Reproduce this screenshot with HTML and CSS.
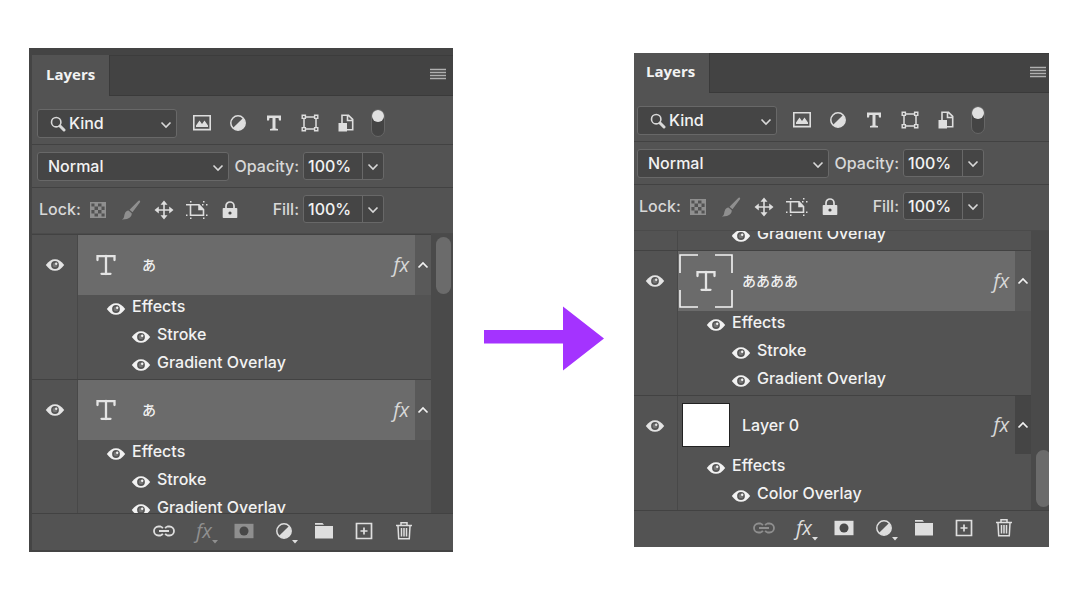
FILE: index.html
```html
<!DOCTYPE html>
<html lang="ja">
<head>
  <meta charset="UTF-8">
  <meta name="viewport" content="width=device-width, initial-scale=1">
  <title>Layers</title>
  <link rel="stylesheet" href="styles.css">
</head>
<body>
<!-- アイコン定義 -->
<svg class="sprite" aria-hidden="true">
  <symbol id="i-menu" viewBox="0 0 16 12"><path d="M0 1.5h16M0 4.5h16M0 7.5h16M0 10.5h16" stroke="currentColor" stroke-width="1.4"/></symbol>
  <symbol id="i-search" viewBox="0 0 16 16"><circle cx="6.2" cy="6.2" r="4.7" fill="none" stroke="currentColor" stroke-width="1.6"/><path d="M10 10l4 4" stroke="currentColor" stroke-width="3" stroke-linecap="round"/></symbol>
  <symbol id="i-down" viewBox="0 0 12 8"><path d="M1.500 1.500L6 6l4.500-4.500" fill="none" stroke="currentColor" stroke-width="1.600"/></symbol>
  <symbol id="i-up" viewBox="0 0 12 8"><path d="M1.500 6.500L6 2l4.500 4.500" fill="none" stroke="currentColor" stroke-width="1.700"/></symbol>
  <symbol id="i-image" viewBox="0 0 20 20"><path d="M1.800 2.800h16.400v13.800H1.800z" fill="none" stroke="currentColor" stroke-width="1.600"/><path d="M4 14V12.500l3.500-5L10 11l2.500-3.500 3.500 5V14z" fill="currentColor"/></symbol>
  <symbol id="i-adjust" viewBox="0 0 20 20"><circle cx="10" cy="10" r="7.200" fill="none" stroke="currentColor" stroke-width="1.500"/><path d="M15.100 4.900A7.200 7.200 0 0 1 4.900 15.100z" fill="currentColor"/></symbol>
  <symbol id="i-type" viewBox="0 0 20 20"><path d="M3 2.500h14V7.500h-2L14.500 5H11.500v10.500l2.500.5v1.500H6V16l2.500-.5V5H5.500L5 7.500H3z" fill="currentColor"/></symbol>
  <symbol id="i-shape" viewBox="0 0 20 20"><path d="M5 4h10M5 16h10M4 5v10M16 5v10" stroke="currentColor" stroke-width="1.500"/><path d="M2.200 2.200h3.200v3.200H2.200zM14.600 2.200h3.200v3.200h-3.200zM2.200 14.600h3.200v3.200H2.200zM14.600 14.600h3.200v3.200h-3.200z" fill="#535353" stroke="currentColor" stroke-width="1.400"/></symbol>
  <symbol id="i-smart" viewBox="0 0 20 20"><path d="M6 10V2.300h6.500l4.200 4v10.400H11M11.500 2.500v5h5" fill="none" stroke="currentColor" stroke-width="1.600"/><path d="M2.500 10h8.500v8.500H2.500z" fill="currentColor"/></symbol>
  <symbol id="i-pixels" viewBox="0 0 20 20"><path d="M2.700 2.700h14.600v14.600H2.700z" fill="none" stroke="currentColor" stroke-width="1.400"/><path d="M6.500 3H10v3.500H6.500zM13.500 3H17v3.500h-3.500zM3 6.500h3.500V10H3zM10 6.500h3.500V10H10zM6.500 10H10v3.500H6.500zM13.500 10H17v3.500h-3.500zM3 13.500h3.500V17H3zM10 13.500h3.500V17H10z" fill="currentColor"/></symbol>
  <symbol id="i-brush" viewBox="0 0 20 20"><path d="M18.800.8c.6.500.4 1.200 0 1.800l-7.300 9.600-3-2.500L17 1.200c.6-.6 1.200-.9 1.800-.4zM7.500 10.600l3.200 2.700c.4 3.200-2.600 6.500-9.900 6.200 2.800-1.500 2-3.200 2.900-5.600.6-1.900 2-3.100 3.800-3.300z" fill="currentColor"/></symbol>
  <symbol id="i-move" viewBox="0 0 20 20"><path d="M10 3v14M3 10h14" stroke="currentColor" stroke-width="1.600"/><path d="M10 .5l3.500 4.300h-7zM10 19.500l3.500-4.300h-7zM.5 10l4.300-3.500v7zM19.500 10l-4.300-3.500v7z" fill="currentColor"/></symbol>
  <symbol id="i-artboard" viewBox="0 0 22 18"><path d="M4.500 3.800V14.200h13V8.500l-4.500-4.700H0M13 4v4.500h4.500" fill="none" stroke="currentColor" stroke-width="1.600"/><path d="M4 0h1.500v1.500H4zM17 0h1.500v1.500H17zM20 3h1.500v1.500H20zM16 3h1.500v1.500H16zM0 13.500h1.500V15H0zM20 13.500h1.500V15H20zM4 16.500h1.500V18H4zM17 16.500h1.500V18H17z" fill="currentColor"/><path d="M13 4l4.500 4.500H13z" fill="currentColor"/></symbol>
  <symbol id="i-lock" viewBox="0 0 20 20"><path d="M6 9V6a4 4 0 0 1 8 0v3" fill="none" stroke="currentColor" stroke-width="1.700"/><path d="M3.500 8h13q.8 0 .8.800v8.400q0 .8-.8.800h-13q-.8 0-.8-.8V8.800q0-.8.800-.8z" fill="currentColor"/><circle cx="10" cy="13" r="1.600" fill="#484848"/></symbol>
  <symbol id="i-eye" viewBox="0 0 20 14"><path d="M.8 7C3.800 3 6.500 1.200 10 1.200S16.200 3 19.200 7c-3 4-5.700 5.800-9.200 5.800S3.800 11 .8 7z" fill="currentColor"/><circle cx="10" cy="7" r="3.900" fill="#555"/><circle cx="10" cy="7" r="2.300" fill="#777"/><circle cx="11.200" cy="5.800" r="1.200" fill="currentColor"/></symbol>
  <symbol id="i-text-layer" viewBox="0 0 20 22"><path d="M1.500 6V2.200h17V6M10 2v18M5.500 19.800h9" fill="none" stroke="currentColor" stroke-width="2.300" stroke-linecap="round"/></symbol>
  <symbol id="i-link" viewBox="0 0 22 12"><path d="M9.800 3.200A4 4 0 0 0 7.500 1.500h-2a4.500 4.500 0 0 0 0 9h2a4 4 0 0 0 2.300-1.700M12.200 3.200a4 4 0 0 1 2.300-1.700h2a4.500 4.500 0 0 1 0 9h-2a4 4 0 0 1-2.300-1.700M6 6h10" fill="none" stroke="currentColor" stroke-width="1.800"/></symbol>
  <symbol id="i-mask" viewBox="0 0 20 16"><path d="M.5.800h19v14.400H.5z" fill="currentColor"/><circle cx="10" cy="8" r="4.500" fill="#484848"/></symbol>
  <symbol id="i-folder" viewBox="0 0 20 18"><path d="M1 1h7.500l1.500 1.800H1zM1 4h18v12.500H1z" fill="currentColor"/></symbol>
  <symbol id="i-new" viewBox="0 0 18 18"><path d="M1.500 1.500h15v15h-15zM9 5.500v7M5.500 9h7" fill="none" stroke="currentColor" stroke-width="1.700"/></symbol>
  <symbol id="i-trash" viewBox="0 0 18 20"><path d="M1 4.500h16M6 4V1.800h6V4M3 5l.7 12.700h10.600L15 5M6.500 7v8.500M9 7v8.500M11.500 7v8.500" fill="none" stroke="currentColor" stroke-width="1.500"/></symbol>
  <symbol id="i-more" viewBox="0 0 6 4"><path d="M0 0h6L3 3.500z" fill="currentColor"/></symbol>
</svg>

<main class="compare">
  <!-- 左: 2つのテキストレイヤーを選択 -->
  <section class="panel panel-before">
    <header class="tabs">
      <button class="tab" type="button">Layers</button>
      <button class="menu" type="button" aria-label="Panel menu"><svg width="16" height="12"><use href="#i-menu"/></svg></button>
    </header>
    <div class="row filter-row">
      <div class="select select-kind">
        <svg class="select-icon" width="16" height="16"><use href="#i-search"/></svg>
        <select aria-label="Filter type"><option>Kind</option></select>
        <svg class="select-arrow" width="12" height="8"><use href="#i-down"/></svg>
      </div>
      <div class="filters">
        <button type="button" aria-label="Pixel layers"><svg width="20" height="20"><use href="#i-image"/></svg></button>
        <button type="button" aria-label="Adjustment layers"><svg width="20" height="20"><use href="#i-adjust"/></svg></button>
        <button type="button" aria-label="Type layers"><svg width="20" height="20"><use href="#i-type"/></svg></button>
        <button type="button" aria-label="Shape layers"><svg width="20" height="20"><use href="#i-shape"/></svg></button>
        <button type="button" aria-label="Smart objects"><svg width="20" height="20"><use href="#i-smart"/></svg></button>
      </div>
      <input class="switch" type="checkbox" aria-label="Filtering" checked>
    </div>
    <div class="row blend-row">
      <div class="select select-blend">
        <select aria-label="Blend mode"><option>Normal</option></select>
        <svg class="select-arrow" width="12" height="8"><use href="#i-down"/></svg>
      </div>
      <label class="amount-label" for="opacity-a">Opacity:</label>
      <div class="amount">
        <input id="opacity-a" type="text" value="100%">
        <button type="button" aria-label="Opacity slider"><svg width="12" height="8"><use href="#i-down"/></svg></button>
      </div>
    </div>
    <div class="row lock-row">
      <span class="lock-label">Lock:</span>
      <div class="locks">
        <button class="dim" type="button" aria-label="Lock transparent pixels"><svg width="20" height="20"><use href="#i-pixels"/></svg></button>
        <button class="dim" type="button" aria-label="Lock image pixels"><svg width="20" height="20"><use href="#i-brush"/></svg></button>
        <button type="button" aria-label="Lock position"><svg width="20" height="20"><use href="#i-move"/></svg></button>
        <button type="button" aria-label="Lock artboard nesting"><svg width="22" height="18"><use href="#i-artboard"/></svg></button>
        <button type="button" aria-label="Lock all"><svg width="20" height="20"><use href="#i-lock"/></svg></button>
      </div>
      <label class="amount-label" for="fill-a">Fill:</label>
      <div class="amount">
        <input id="fill-a" type="text" value="100%">
        <button type="button" aria-label="Fill slider"><svg width="12" height="8"><use href="#i-down"/></svg></button>
      </div>
    </div>

    <div class="list">
      <div class="layers">
        <article class="group">
          <div class="visibility"><button type="button" aria-label="Toggle layer"><svg width="20" height="14"><use href="#i-eye"/></svg></button></div>
          <div class="detail">
            <div class="layer selected">
              <div class="thumb"><svg width="20" height="22"><use href="#i-text-layer"/></svg></div>
              <span class="name name-ja">あ</span>
              <span class="fx">fx</span>
              <button class="fold" type="button" aria-label="Collapse effects"><svg width="12" height="8"><use href="#i-up"/></svg></button>
            </div>
            <ul class="effects">
              <li class="effects-title"><svg width="20" height="14"><use href="#i-eye"/></svg><span>Effects</span></li>
              <li><svg width="20" height="14"><use href="#i-eye"/></svg><span>Stroke</span></li>
              <li><svg width="20" height="14"><use href="#i-eye"/></svg><span>Gradient Overlay</span></li>
            </ul>
          </div>
        </article>
        <article class="group">
          <div class="visibility"><button type="button" aria-label="Toggle layer"><svg width="20" height="14"><use href="#i-eye"/></svg></button></div>
          <div class="detail">
            <div class="layer selected">
              <div class="thumb"><svg width="20" height="22"><use href="#i-text-layer"/></svg></div>
              <span class="name name-ja">あ</span>
              <span class="fx">fx</span>
              <button class="fold" type="button" aria-label="Collapse effects"><svg width="12" height="8"><use href="#i-up"/></svg></button>
            </div>
            <ul class="effects">
              <li class="effects-title"><svg width="20" height="14"><use href="#i-eye"/></svg><span>Effects</span></li>
              <li><svg width="20" height="14"><use href="#i-eye"/></svg><span>Stroke</span></li>
              <li><svg width="20" height="14"><use href="#i-eye"/></svg><span>Gradient Overlay</span></li>
            </ul>
          </div>
        </article>
      </div>
      <div class="track"><div class="track-thumb"></div></div>
    </div>

    <footer class="actions">
      <button type="button" aria-label="Link layers"><svg width="22" height="12"><use href="#i-link"/></svg></button>
      <button class="dim" type="button" aria-label="Add a layer style"><span class="fx">fx</span><svg class="more" width="6" height="4"><use href="#i-more"/></svg></button>
      <button class="dim" type="button" aria-label="Add layer mask"><svg width="20" height="16"><use href="#i-mask"/></svg></button>
      <button type="button" aria-label="New adjustment layer"><svg width="20" height="20"><use href="#i-adjust"/></svg><svg class="more" width="6" height="4"><use href="#i-more"/></svg></button>
      <button type="button" aria-label="New group"><svg width="20" height="18"><use href="#i-folder"/></svg></button>
      <button type="button" aria-label="New layer"><svg width="18" height="18"><use href="#i-new"/></svg></button>
      <button type="button" aria-label="Delete layer"><svg width="18" height="20"><use href="#i-trash"/></svg></button>
    </footer>
  </section>

  <svg class="arrow" width="120" height="65" viewBox="0 0 120 65" role="img" aria-label="→"><path d="M0 24h79V0.500l41 32L79 64.500V37.500H0z"/></svg>

  <!-- 右: 1つのテキストレイヤーに結合 -->
  <section class="panel panel-after">
    <header class="tabs">
      <button class="tab" type="button">Layers</button>
      <button class="menu" type="button" aria-label="Panel menu"><svg width="16" height="12"><use href="#i-menu"/></svg></button>
    </header>
    <div class="row filter-row">
      <div class="select select-kind">
        <svg class="select-icon" width="16" height="16"><use href="#i-search"/></svg>
        <select aria-label="Filter type"><option>Kind</option></select>
        <svg class="select-arrow" width="12" height="8"><use href="#i-down"/></svg>
      </div>
      <div class="filters">
        <button type="button" aria-label="Pixel layers"><svg width="20" height="20"><use href="#i-image"/></svg></button>
        <button type="button" aria-label="Adjustment layers"><svg width="20" height="20"><use href="#i-adjust"/></svg></button>
        <button type="button" aria-label="Type layers"><svg width="20" height="20"><use href="#i-type"/></svg></button>
        <button type="button" aria-label="Shape layers"><svg width="20" height="20"><use href="#i-shape"/></svg></button>
        <button type="button" aria-label="Smart objects"><svg width="20" height="20"><use href="#i-smart"/></svg></button>
      </div>
      <input class="switch" type="checkbox" aria-label="Filtering" checked>
    </div>
    <div class="row blend-row">
      <div class="select select-blend">
        <select aria-label="Blend mode"><option>Normal</option></select>
        <svg class="select-arrow" width="12" height="8"><use href="#i-down"/></svg>
      </div>
      <label class="amount-label" for="opacity-b">Opacity:</label>
      <div class="amount">
        <input id="opacity-b" type="text" value="100%">
        <button type="button" aria-label="Opacity slider"><svg width="12" height="8"><use href="#i-down"/></svg></button>
      </div>
    </div>
    <div class="row lock-row">
      <span class="lock-label">Lock:</span>
      <div class="locks">
        <button class="dim" type="button" aria-label="Lock transparent pixels"><svg width="20" height="20"><use href="#i-pixels"/></svg></button>
        <button class="dim" type="button" aria-label="Lock image pixels"><svg width="20" height="20"><use href="#i-brush"/></svg></button>
        <button type="button" aria-label="Lock position"><svg width="20" height="20"><use href="#i-move"/></svg></button>
        <button type="button" aria-label="Lock artboard nesting"><svg width="22" height="18"><use href="#i-artboard"/></svg></button>
        <button type="button" aria-label="Lock all"><svg width="20" height="20"><use href="#i-lock"/></svg></button>
      </div>
      <label class="amount-label" for="fill-b">Fill:</label>
      <div class="amount">
        <input id="fill-b" type="text" value="100%">
        <button type="button" aria-label="Fill slider"><svg width="12" height="8"><use href="#i-down"/></svg></button>
      </div>
    </div>

    <div class="list list-end">
      <div class="layers">
        <article class="group">
          <div class="visibility"></div>
          <div class="detail">
            <ul class="effects">
              <li><svg width="20" height="14"><use href="#i-eye"/></svg><span>Gradient Overlay</span></li>
            </ul>
          </div>
        </article>
        <article class="group">
          <div class="visibility"><button type="button" aria-label="Toggle layer"><svg width="20" height="14"><use href="#i-eye"/></svg></button></div>
          <div class="detail">
            <div class="layer selected">
              <div class="thumb">
                <svg width="20" height="22"><use href="#i-text-layer"/></svg>
                <svg class="corners" width="54" height="54" viewBox="0 0 54 54"><path d="M19 1H1v18M36 1h17v18M1 36v17h18M53 36v17H36"/></svg>
              </div>
              <span class="name name-ja">ああああ</span>
              <span class="fx">fx</span>
              <button class="fold" type="button" aria-label="Collapse effects"><svg width="12" height="8"><use href="#i-up"/></svg></button>
            </div>
            <ul class="effects">
              <li class="effects-title"><svg width="20" height="14"><use href="#i-eye"/></svg><span>Effects</span></li>
              <li><svg width="20" height="14"><use href="#i-eye"/></svg><span>Stroke</span></li>
              <li><svg width="20" height="14"><use href="#i-eye"/></svg><span>Gradient Overlay</span></li>
            </ul>
          </div>
        </article>
        <article class="group">
          <div class="visibility"><button type="button" aria-label="Toggle layer"><svg width="20" height="14"><use href="#i-eye"/></svg></button></div>
          <div class="detail">
            <div class="layer">
              <div class="thumb"><span class="pixels"></span></div>
              <span class="name">Layer 0</span>
              <span class="fx">fx</span>
              <button class="fold" type="button" aria-label="Collapse effects"><svg width="12" height="8"><use href="#i-up"/></svg></button>
            </div>
            <ul class="effects">
              <li class="effects-title"><svg width="20" height="14"><use href="#i-eye"/></svg><span>Effects</span></li>
              <li><svg width="20" height="14"><use href="#i-eye"/></svg><span>Color Overlay</span></li>
            </ul>
          </div>
        </article>
      </div>
      <div class="track"><div class="track-thumb"></div></div>
    </div>

    <footer class="actions">
      <button class="dim" type="button" aria-label="Link layers"><svg width="22" height="12"><use href="#i-link"/></svg></button>
      <button type="button" aria-label="Add a layer style"><span class="fx">fx</span><svg class="more" width="6" height="4"><use href="#i-more"/></svg></button>
      <button type="button" aria-label="Add layer mask"><svg width="20" height="16"><use href="#i-mask"/></svg></button>
      <button type="button" aria-label="New adjustment layer"><svg width="20" height="20"><use href="#i-adjust"/></svg><svg class="more" width="6" height="4"><use href="#i-more"/></svg></button>
      <button type="button" aria-label="New group"><svg width="20" height="18"><use href="#i-folder"/></svg></button>
      <button type="button" aria-label="New layer"><svg width="18" height="18"><use href="#i-new"/></svg></button>
      <button type="button" aria-label="Delete layer"><svg width="18" height="20"><use href="#i-trash"/></svg></button>
    </footer>
  </section>
</main>
</body>
</html>
```
FILE: styles.css
```css
* {
    box-sizing: border-box;
}

body {
    margin: 0;
    background-color: #fff;
    color: #f2f2f2;
    font: 500 16px/20px Inter, "Noto Sans CJK JP", sans-serif;
}

svg {
    display: block;
    flex: none;
}

button,
input,
select {
    margin: 0;
    padding: 0;
    border: 0;
    background: none;
    color: inherit;
    font: inherit;
}

button {
    display: flex;
    align-items: center;
    justify-content: center;
}

.sprite {
    position: absolute;
    width: 0;
    height: 0;
}

.compare {
    display: grid;
    grid-template-columns: 424fr 121px 415fr;
    column-gap: 30px;
    align-items: center;
    min-height: 100vh;
    padding: 0 31px 0 29px;
}

.arrow {
    justify-self: end;
    margin-top: 77px;
    fill: #a433ff;
}

/* パネル */
.panel {
    --edge: 5px;
    --tab-height: 41px;
    --track: 22px;
    min-width: 0;
    overflow: hidden;
    background-color: #535353;
}

.panel-before {
    border: solid #444;
    border-width: 7px 0 2px 3px;
}

.panel-after {
    --edge: 3px;
    --tab-height: 40px;
    --track: 18px;
}

.tabs {
    display: flex;
    justify-content: space-between;
    height: var(--tab-height);
    background-color: #434343;
    box-shadow: inset 0 -1px #3a3a3a, inset 0 1px #3c3c3c;
}

.tab {
    padding: 0 14px 4px calc(var(--edge) + 9px);
    border-right: 1px solid #3a3a3a;
    background-color: #535353;
    font: 700 15px/20px "Open Sans", sans-serif;
}

.menu {
    width: 16px;
    margin-right: 7px;
    padding-bottom: 3px;
    color: #b0b0b0;
}

.panel-after .menu {
    margin-right: 3px;
}

.row {
    display: flex;
    align-items: flex-start;
    padding-left: var(--edge);
    border-bottom: 1px solid #424242;
}

.filter-row {
    height: 49px;
    padding-top: 13px;
}

.blend-row {
    height: 43px;
    padding-top: 7px;
}

.lock-row {
    height: 46px;
    padding-top: 7px;
    border-bottom-color: #4b4b4b;
}

/* 入力部品 */
.select {
    position: relative;
    height: 29px;
}

.select select {
    width: 100%;
    height: 100%;
    padding: 0 0 1px 10px;
    border: 1px solid #686868;
    border-radius: 3px;
    background-color: #454545;
    appearance: none;
}

.select-kind {
    width: 140px;
}

.select-kind select {
    padding-left: 31px;
}

.select-blend {
    width: 192px;
}

.select-icon {
    position: absolute;
    top: 7px;
    left: 13px;
    color: #d8d8d8;
}

.select-arrow {
    position: absolute;
    top: 12px;
    right: 5px;
    color: #d8d8d8;
}

.filters {
    display: flex;
    gap: 16px;
    margin-left: 15px;
    color: #dedede;
}

.filters button {
    width: 20px;
    height: 28px;
}

.switch {
    width: 14px;
    height: 28px;
    margin-left: 15px;
    border: 1px solid #666;
    border-radius: 7px;
    background-color: #444;
    appearance: none;
}

.switch::before {
    content: "";
    display: block;
    width: 12px;
    height: 12px;
    border-radius: 50%;
    background-color: #e0e0e0;
}

.amount-label {
    width: 70px;
    color: #d8d8d8;
    line-height: 29px;
    text-align: right;
}

.amount {
    display: flex;
    width: 81px;
    height: 28px;
    margin-left: 4px;
    border: 1px solid #686868;
    border-radius: 3px;
    background-color: #454545;
}

.amount input {
    width: 59px;
    padding-left: 4px;
    border-right: 1px solid #686868;
}

.amount button {
    flex: 1;
    padding-top: 2px;
    color: #d8d8d8;
}

.lock-label {
    width: 44px;
    padding-left: 2px;
    color: #d8d8d8;
    line-height: 29px;
}

.locks {
    display: flex;
    color: #dedede;
}

.locks button {
    width: 33px;
    height: 29px;
}

.lock-row .amount-label {
    width: 53px;
}

.dim {
    color: #8f8f8f;
}

/* レイヤー一覧 */
.list {
    display: flex;
    height: 279px;
}

.layers {
    flex: 1;
    display: flex;
    flex-direction: column;
    overflow: hidden;
}

.list-end .layers {
    justify-content: flex-end;
}

.group {
    flex: none;
    display: flex;
    border-top: 1px solid #424242;
}

.visibility {
    flex: none;
    width: calc(var(--edge) + 41px);
    padding-left: calc(var(--edge) + 8px);
    border-right: 1px solid #484848;
    color: #e4e4e4;
}

.visibility button {
    height: 60px;
}

.detail {
    flex: 1;
    min-width: 0;
}

.layer {
    display: flex;
    align-items: center;
    height: 58px;
}

.layer.selected {
    height: 60px;
    background-color: #6b6b6b;
}

.thumb {
    position: relative;
    display: flex;
    justify-content: center;
    width: 56px;
    color: #e4e4e4;
}

.corners {
    position: absolute;
    top: -16px;
    left: 1px;
    fill: none;
    stroke: #f4f4f4;
    stroke-width: 1.6;
}

.pixels {
    width: 48px;
    height: 44px;
    border: 1px solid #222;
    background-color: #fff;
}

.name {
    flex: 1;
    padding-left: 8px;
}

.name-ja {
    font-size: 14px;
}

.fx {
    color: #d8d8d8;
    font: italic 400 20px/24px "Open Sans", sans-serif;
}

.fold {
    align-self: stretch;
    width: 16px;
    margin-left: 6px;
    background-color: #454545;
}

.selected .fold {
    background-color: #595959;
}

.effects {
    margin: 0;
    padding: 0;
    list-style: none;
}

.effects li {
    display: flex;
    align-items: center;
    gap: 6px;
    height: 28px;
    padding-left: 53px;
}

.effects .effects-title {
    padding-left: 28px;
}

.effects span {
    padding-bottom: 6px;
}

.track {
    display: flex;
    flex-direction: column;
    width: var(--track);
    padding: 3px 0 3px 5px;
    background-color: #4a4a4a;
}

.list-end .track {
    justify-content: flex-end;
}

.track-thumb {
    width: 15px;
    height: 57px;
    border-radius: 8px;
    background-color: #6b6b6b;
}

/* 下部ボタン */
.actions {
    display: flex;
    height: 37px;
    padding-left: calc(var(--edge) + 107px);
    border-top: 1px solid #424242;
    color: #dedede;
}

.actions button {
    position: relative;
    width: 40px;
    padding-bottom: 2px;
}

.actions .fx {
    color: inherit;
}

.actions .dim {
    color: #8f8f8f;
}

.more {
    position: absolute;
    right: 6px;
    bottom: 6px;
}
```
